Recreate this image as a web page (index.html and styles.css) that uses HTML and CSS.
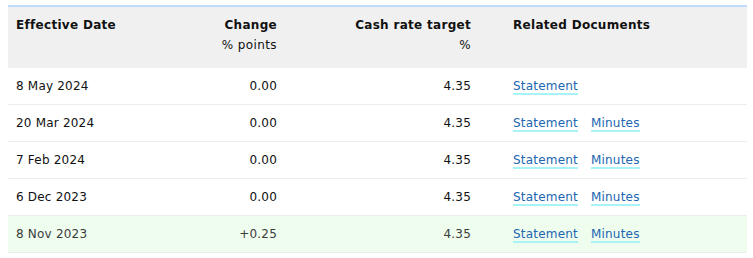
FILE: index.html
```html
<!DOCTYPE html>
<html>
<head>
<meta charset="utf-8">
<link rel="stylesheet" href="styles.css">
</head>
<body>
<table class="rates">
  <colgroup>
    <col class="c-date">
    <col class="c-change">
    <col class="c-target">
    <col class="c-docs">
  </colgroup>
  <thead>
    <tr>
      <th class="left">Effective Date</th>
      <th class="num">Change<span class="unit">% points</span></th>
      <th class="num">Cash rate target<span class="unit">%</span></th>
      <th class="left docs">Related Documents</th>
    </tr>
  </thead>
  <tbody>
    <tr>
      <td>8 May 2024</td>
      <td class="num">0.00</td>
      <td class="num">4.35</td>
      <td class="docs"><a href="#">Statement</a></td>
    </tr>
    <tr>
      <td>20 Mar 2024</td>
      <td class="num">0.00</td>
      <td class="num">4.35</td>
      <td class="docs"><a href="#">Statement</a><a href="#">Minutes</a></td>
    </tr>
    <tr>
      <td>7 Feb 2024</td>
      <td class="num">0.00</td>
      <td class="num">4.35</td>
      <td class="docs"><a href="#">Statement</a><a href="#">Minutes</a></td>
    </tr>
    <tr>
      <td>6 Dec 2023</td>
      <td class="num">0.00</td>
      <td class="num">4.35</td>
      <td class="docs"><a href="#">Statement</a><a href="#">Minutes</a></td>
    </tr>
    <tr class="rise">
      <td>8 Nov 2023</td>
      <td class="num">+0.25</td>
      <td class="num">4.35</td>
      <td class="docs"><a href="#">Statement</a><a href="#">Minutes</a></td>
    </tr>
  </tbody>
</table>
</body>
</html>
```
FILE: styles.css
```css
html, body {
  background: #ffffff;
}
body {
  margin: 5px 0 0 8px;
  font-family: "DejaVu Sans", Verdana, sans-serif;
  font-size: 12px;
  letter-spacing: 0.2px;
  color: #111;
}
.rates {
  width: 739px;
  border-collapse: collapse;
  table-layout: fixed;
  border-top: 2px solid #bfdcfd;
}
.c-date { width: 150px; }
.c-change { width: 127px; }
.c-target { width: 194px; }
.c-docs { width: auto; }

.rates thead th {
  background: #f0f0f0;
  font-weight: bold;
  letter-spacing: 0.3px;
  line-height: 20px;
  padding: 8px 8px 13px;
  vertical-align: top;
  color: #111;
}
.rates th.left { text-align: left; }
.rates .num { text-align: right; }
.unit {
  display: block;
  font-weight: normal;
  letter-spacing: 0.4px;
}
.rates td {
  padding: 10px 8px;
  line-height: 16px;
  border-bottom: 1px solid #ececec;
}
.rates .docs { padding-left: 34px; }
.rates a {
  color: #2166b0;
  text-decoration: none;
  border-bottom: 2px solid #a8f3f7;
  margin-right: 13px;
}
.rates tr.rise td {
  background: #effdef;
  color: #3c3c3c;
}
```
